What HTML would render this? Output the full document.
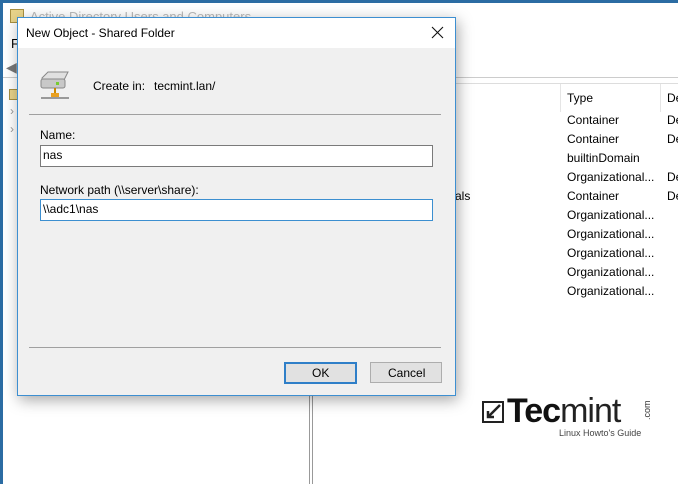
<!DOCTYPE html>
<html><head><style>
body{margin:0;width:678px;height:484px;position:relative;overflow:hidden;background:#fff;font-family:"Liberation Sans",sans-serif;font-size:12px;color:#000}
.a{position:absolute}
.t{position:absolute;white-space:nowrap}
</style></head><body>
<div class="a" style="left:0;top:0;width:678px;height:3px;background:#2b6ca3"></div>
<div class="a" style="left:0;top:0;width:3px;height:484px;background:#2b6ca3"></div>
<div class="t" style="left:30px;top:9px;color:#bbb;font-size:13px">Active Directory Users and Computers</div>
<div class="a" style="left:10px;top:9px;width:12px;height:12px;background:#e8d48a;border:1px solid #a89040"></div>
<div class="t" style="left:11px;top:36px;font-size:13px">F</div>
<div class="a" style="left:3px;top:57px;width:675px;height:20px;background:#fff;border-bottom:1px solid #ccc"></div>
<div class="t" style="left:6px;top:59px;color:#777;font-size:14px">◀</div>
<div class="a" style="left:9px;top:89px;width:10px;height:9px;background:#e8d48a;border:1px solid #a89040"></div>
<div class="t" style="left:10px;top:104px;color:#999">›</div>
<div class="t" style="left:10px;top:122px;color:#999">›</div>
<div class="a" style="left:309px;top:84px;width:1px;height:400px;background:#999"></div>
<div class="a" style="left:312px;top:84px;width:1px;height:400px;background:#999"></div>
<div class="a" style="left:313px;top:83px;width:365px;height:1px;background:#ddd"></div>
<div class="a" style="left:560px;top:84px;width:1px;height:28px;background:#e5e5e5"></div>
<div class="a" style="left:660px;top:84px;width:1px;height:28px;background:#e5e5e5"></div>
<div class="t" style="left:567px;top:91px">Type</div>
<div class="t" style="left:667px;top:91px">De</div>
<div class="t" style="left:567px;top:113px">Container</div><div class="t" style="left:667px;top:113px">De</div>
<div class="t" style="left:567px;top:132px">Container</div><div class="t" style="left:667px;top:132px">De</div>
<div class="t" style="left:567px;top:151px">builtinDomain</div>
<div class="t" style="left:567px;top:170px">Organizational...</div><div class="t" style="left:667px;top:170px">De</div>
<div class="t" style="left:455px;top:189px">als</div>
<div class="t" style="left:567px;top:189px">Container</div><div class="t" style="left:667px;top:189px">De</div>
<div class="t" style="left:567px;top:208px">Organizational...</div>
<div class="t" style="left:567px;top:227px">Organizational...</div>
<div class="t" style="left:567px;top:246px">Organizational...</div>
<div class="t" style="left:567px;top:265px">Organizational...</div>
<div class="t" style="left:567px;top:284px">Organizational...</div>
<!-- logo -->
<div class="a" style="left:482px;top:401px;width:22px;height:22px;border:2px solid #222;box-sizing:border-box"></div>
<svg class="a" style="left:482px;top:401px" width="22" height="22"><path d="M18 4 L6 16 M6 10 V16 H12" stroke="#222" stroke-width="2.5" fill="none"/></svg>
<div class="t" style="left:507px;top:393px;font-size:34px;font-weight:bold;color:#111;letter-spacing:-1px;line-height:36px">Tec<span style="font-weight:normal;color:#222">mint</span></div>
<div class="t" style="left:559px;top:428px;font-size:9px;color:#444">Linux Howto's Guide</div>
<div class="t" style="left:642px;top:420px;font-size:9px;color:#333;transform:rotate(-90deg);transform-origin:left top">.com</div>
<!-- dialog -->
<div class="a" style="left:17px;top:17px;width:437px;height:377px;background:#f0f0f0;border:1px solid #3d8fd1;box-shadow:2px 4px 14px rgba(0,0,0,.35)"></div>
<div class="a" style="left:18px;top:18px;width:437px;height:30px;background:#fff"></div>
<div class="t" style="left:26px;top:26px">New Object - Shared Folder</div>
<svg class="a" style="left:431px;top:26px" width="13" height="13"><path d="M1 1L12 12M12 1L1 12" stroke="#111" stroke-width="1.1"/></svg>
<svg class="a" style="left:38px;top:68px" width="34" height="34">
<path d="M4 10 L10 4 H30 L26 12 H4 Z" fill="#e0e0e0" stroke="#888"/>
<rect x="3" y="11" width="24" height="9" rx="2" fill="#c8c8c8" stroke="#888"/>
<rect x="18" y="14" width="3" height="3" fill="#7c3"/>
<rect x="16" y="20" width="2" height="6" fill="#c80"/>
<rect x="13" y="25" width="8" height="5" fill="#e9a020"/>
<path d="M3 30 H31" stroke="#999" stroke-width="2"/>
</svg>
<div class="t" style="left:93px;top:79px">Create in:</div>
<div class="t" style="left:154px;top:79px">tecmint.lan/</div>
<div class="a" style="left:29px;top:114px;width:412px;height:1px;background:#a0a0a0"></div>
<div class="t" style="left:40px;top:128px">Name:</div>
<div class="a" style="left:40px;top:145px;width:391px;height:20px;background:#fff;border:1px solid #7a7a7a"></div>
<div class="t" style="left:43px;top:148px">nas</div>
<div class="t" style="left:40px;top:183px">Network path (\\server\share):</div>
<div class="a" style="left:40px;top:199px;width:391px;height:20px;background:#fff;border:1px solid #3c8fd0"></div>
<div class="t" style="left:43px;top:202px">\\adc1\nas</div>
<div class="a" style="left:29px;top:347px;width:412px;height:1px;background:#a0a0a0"></div>
<div class="a" style="left:284px;top:362px;width:69px;height:18px;background:#e1e1e1;border:2px solid #2f7fc8"></div>
<div class="t" style="left:312px;top:366px">OK</div>
<div class="a" style="left:370px;top:362px;width:70px;height:19px;background:#e1e1e1;border:1px solid #adadad"></div>
<div class="t" style="left:388px;top:366px">Cancel</div>
</body></html>
